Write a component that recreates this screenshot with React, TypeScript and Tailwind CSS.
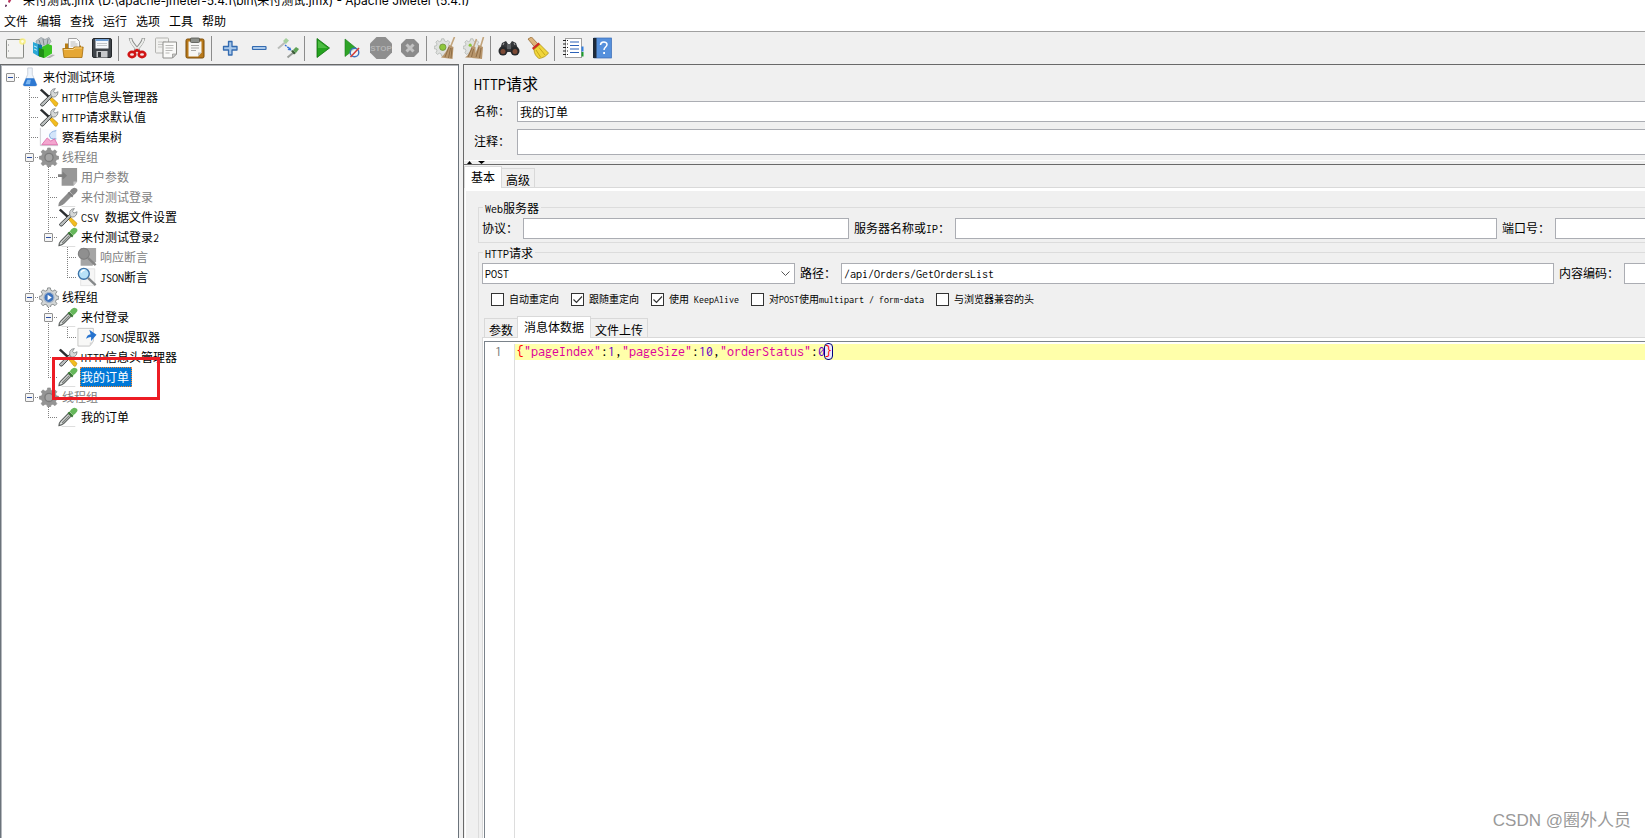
import React, { useState } from "react";

type IconProps = { className?: string };

const svg = (children: React.ReactNode, size = "size-[22px]") => (
  <svg viewBox="0 0 22 22" className={`${size} shrink-0`} aria-hidden="true">
    {children}
  </svg>
);

const NewIcon = () =>
  svg(
    <>
      <rect x="2.5" y="2.5" width="17" height="18.5" rx="1" fill="#f4f4f2" stroke="#888a85" />
      <path d="M4.5 7v2M4.5 13v2" stroke="#bbb" />
      <circle cx="18.500" cy="4.5" r="3.3" fill="#f8ee7a" opacity=".85" />
      <circle cx="18.500" cy="4.5" r="1.4" fill="#fffde0" />
    </>,
  );

const TemplatesIcon = () =>
  svg(
    <>
      <path d="M3 4l5-3.500 4 2 4-2 2 4-5 6-8 2z" fill="#bcc3c8" stroke="#8d9499" strokeWidth=".7" />
      <path d="M6 3l2 6M10 2l1 6M15 2l-1 6" stroke="#6c757b" strokeWidth=".8" />
      <path d="M0 5l5 2v12l-5-3z" fill="#2ba8d6" />
      <path d="M1 9l3 1.300M1 12l3 1.300" stroke="#d5f2ff" strokeWidth=".9" />
      <path d="M5 7l4 1v12l-4-1z" fill="#1279a3" />
      <path d="M9 10l6-3 4 1.500v8L11.500 21 9 20z" fill="#3cc524" />
      <path d="M6 11l5 1.500V21l-5-1.500z" fill="#1f8f14" />
      <path d="M13 21l6-3.500 3 .5-5 3z" fill="#777" opacity=".5" />
    </>,
  );

const OpenIcon = () =>
  svg(
    <>
      <path d="M3 18V6.500h4l1 2h11V18z" fill="#b87d12" />
      <path d="M6.500 12V1.500h8l3 3V12z" fill="#fafafa" stroke="#8b8b8b" strokeWidth=".8" />
      <path d="M8.500 5h5M8.500 7h7M8.500 9h7" stroke="#aaa" strokeWidth=".8" />
      <path d="M2 20.500L.8 11.500h10l1.500-1.500h8.900L20 20.500z" fill="#e5a734" stroke="#a66d0d" strokeWidth=".8" />
      <path d="M2 12.500h9.500l1.500-1.500h7" stroke="#f7d58a" fill="none" />
    </>,
  );

const SaveIcon = () =>
  svg(
    <>
      <rect x="1.500" y="1.500" width="19" height="19" rx="1.500" fill="#3f4449" stroke="#25282b" />
      <rect x="4.500" y="2" width="13" height="9.500" fill="#f5f8fb" />
      <path d="M4.500 2h13v2h-13z" fill="#6f9fd4" />
      <path d="M6 6.500h10M6 8.500h10" stroke="#b5b9bd" strokeWidth=".8" />
      <rect x="5.500" y="14" width="11" height="6.500" fill="#c7c9cb" />
      <rect x="7" y="15" width="3" height="5" fill="#33373b" />
    </>,
  );

const CutIcon = () =>
  svg(
    <>
      <path d="M4.500 1c0 4 4 8 8.500 13" stroke="#8a8d8a" strokeWidth="3.400" fill="none" />
      <path d="M17.500 1c0 4-4 8-8.500 13" stroke="#8a8d8a" strokeWidth="3.400" fill="none" />
      <path d="M4.500 1.500c0 3.500 4 8 7.500 11.500M17.500 1.500c0 3.500-4 8-7.500 11.500" stroke="#ecedeb" strokeWidth="2" fill="none" />
      <ellipse cx="6" cy="17.500" rx="3.300" ry="2.600" fill="#f4e4e4" stroke="#d01414" strokeWidth="2.600" />
      <ellipse cx="16" cy="17.500" rx="3.300" ry="2.600" fill="#f4e4e4" stroke="#d01414" strokeWidth="2.600" />
      <path d="M8 15l3-2 3 2" stroke="#d01414" strokeWidth="2.400" fill="none" />
    </>,
  );

const CopyIcon = () =>
  svg(
    <>
      <rect x=".5" y="1" width="13" height="15" rx=".8" fill="#f1f1ef" stroke="#b3b3b0" />
      <path d="M3 5h8M3 7.500h5M3 10h4" stroke="#c5c5c3" />
      <path d="M8 5h13.500v12l-4 4H8z" fill="#fafaf9" stroke="#8f8f8c" />
      <path d="M10.500 8.500h8M10.500 11h8M10.500 13.500h7M10.500 16h4" stroke="#b8b8b6" />
      <path d="M17.500 21v-4h4z" fill="#ccc" stroke="#8f8f8c" strokeWidth=".7" />
    </>,
  );

const PasteIcon = () =>
  svg(
    <>
      <rect x="2" y="2" width="18" height="19" rx="1.500" fill="#b8791b" stroke="#7a4c08" />
      <path d="M4.500 4.500h13v11l-3.500 4H4.500z" fill="#f6f6f4" />
      <path d="M14 19.500v-4h3.500z" fill="#bdbdbb" />
      <path d="M7 8.500h8M7 11h8M7 13.500h5" stroke="#a8a8a6" />
      <rect x="6.500" y="1" width="9" height="4.500" rx="1" fill="#8d908b" stroke="#50534e" strokeWidth=".8" />
    </>,
  );

const PlusIcon = () =>
  svg(
    <path
      d="M9.500 4.500h3.500v5h5V13h-5v5H9.500v-5h-5V9.500h5z"
      fill="#a9c8ea"
      stroke="#346bb0"
      strokeWidth="1.300"
      strokeLinejoin="round"
    />,
  );

const MinusIcon = () =>
  svg(<rect x="4.500" y="9.500" width="13.500" height="3" rx=".5" fill="#a9c8ea" stroke="#346bb0" strokeWidth="1.200" />);

const ToggleIcon = () =>
  svg(
    <>
      <path d="M1 11.500l7-6" stroke="#b9bcb9" strokeWidth="2" />
      <path d="M6 4l3-3 3 2.500L9 7z" fill="#a5cf9e" />
      <path d="M8 8l5 4" stroke="#2f6fd8" strokeWidth="1.300" strokeDasharray="2 1" />
      <path d="M14.500 13.500l-4-.5 2.500-3z" fill="#2f6fd8" />
      <path d="M10.500 20.500l6-5" stroke="#9a9e9a" strokeWidth="2" />
      <path d="M14 14l2-1 3 3-2 1.500z" fill="#3b5c38" />
      <path d="M16 13l3-3 3 2-3 4z" fill="#5ea257" />
    </>,
  );

const StartIcon = () =>
  svg(
    <>
      <path d="M5 1.500L17.500 11 5 20.500z" fill="#25a31f" stroke="#0c6d0b" strokeWidth=".8" />
      <path d="M6 3.500L15.500 11H6z" fill="#69cf5c" opacity=".6" />
    </>,
  );

const StartNoPauseIcon = () =>
  svg(
    <>
      <path d="M4 2L15 11 4 19.500z" fill="#2ea427" stroke="#1a7a18" strokeWidth=".6" />
      <circle cx="13.500" cy="15.500" r="4.300" fill="#f3f6fb" fillOpacity=".8" stroke="#3f72bf" strokeWidth="1.400" />
      <path d="M9.500 20l8.500-9" stroke="#d63a34" strokeWidth="1.500" />
    </>,
  );

const StopIcon = () =>
  svg(
    <>
      <path d="M6.500 0h9L22 6.500v9L15.500 22h-9L0 15.500v-9z" fill="#8e8e8e" />
      <text x="11" y="14" fontSize="8" fontWeight="bold" textAnchor="middle" fill="#b4b4b4" fontFamily="Liberation Sans, sans-serif">
        STOP
      </text>
    </>,
  );

const ShutdownIcon = () =>
  svg(
    <>
      <path d="M7 2h8l5 5v8l-5 5H7l-5-5V7z" fill="#8b8b8b" />
      <path d="M7.500 7.500l7 7M14.500 7.500l-7 7" stroke="#c2c2c2" strokeWidth="3" />
    </>,
  );

const gearPath =
  "M9.500 1h3l.6 2.700 2.200.9 2.300-1.500 2.100 2.100-1.500 2.300.9 2.200 2.700.6v3l-2.700.6-.9 2.200 1.500 2.300-2.100 2.100-2.300-1.500-2.200.9-.6 2.700h-3l-.6-2.700-2.200-.9-2.300 1.500-2.100-2.100 1.500-2.300-.9-2.200L.2 13.300v-3l2.700-.6.9-2.200-1.500-2.300 2.100-2.100 2.300 1.500 2.200-.9z";

const ClearIcon = () =>
  svg(
    <>
      <g transform="translate(0 1) scale(.8)">
        <path d={gearPath} fill="#dfe1df" stroke="#b3b6b3" />
        <circle cx="11" cy="11.500" r="4" fill="#8dc63a" stroke="#6c8f3a" />
      </g>
      <path d="M20.500 0l-4 10" stroke="#c2a47b" strokeWidth="1.600" />
      <path d="M15 8l4.500 2-1 12L7 20.500c3-2 6-7 8-12.500z" fill="#b8966c" />
      <path d="M15 10l-4 10M16.500 11l-2 10M18 11l-1 10" stroke="#85633c" strokeWidth=".8" />
    </>,
  );

const ClearAllIcon = () =>
  svg(
    <>
      <g transform="translate(0 1) scale(.8)">
        <path d={gearPath} fill="#dfe1df" stroke="#b3b6b3" />
        <circle cx="9" cy="9" r="2" fill="#8dc63a" />
      </g>
      <path d="M13.500 2l-3 8M20.500 0l-3 10" stroke="#c2a47b" strokeWidth="1.600" />
      <path d="M8.500 9l4 1v11L2 20.500c3-2 5.500-6 6.500-11.500z" fill="#b8966c" />
      <path d="M15.500 8l4.500 2-1 12-10-1c3-3 5-8 6.500-13z" fill="#b8966c" />
      <path d="M9 11l-4 9M10.500 12l-2 8M16 10l-3 10M18 11l-1.500 10" stroke="#85633c" strokeWidth=".8" />
    </>,
  );

const SearchIcon = () =>
  svg(
    <>
      <path d="M4 6l4-2 2 3h2l2-3 4 2 3 9H1z" fill="#35373a" />
      <rect x="9" y="7" width="4" height="5" fill="#5d6063" />
      <circle cx="5" cy="14" r="4.500" fill="#26282a" />
      <circle cx="17" cy="14" r="4.500" fill="#26282a" />
      <circle cx="5" cy="14.500" r="2.500" fill="#7d4a35" />
      <circle cx="17" cy="14.500" r="2.500" fill="#7d4a35" />
      <path d="M5 8l1-2M17 8l-1-2" stroke="#aaa" />
    </>,
  );

const SearchResetIcon = () =>
  svg(
    <>
      <path d="M1 2l3.500-2 7 7.500-3.500 3z" fill="#dcb27a" stroke="#8d6126" strokeWidth=".7" />
      <path d="M5 11l6.500-5.500 2 2L6.500 13z" fill="#cf2b24" />
      <path d="M7 12.500l6-5 8.500 8.500c-2 3-5.500 5-9.500 5.500-3-2-5-5-5-9z" fill="#f0d53b" stroke="#a88908" strokeWidth=".7" />
      <path d="M9 13l4.500 7M12 10.500l6 7.500" stroke="#bb9a12" strokeWidth=".8" />
    </>,
  );

const FunctionIcon = () =>
  svg(
    <>
      <rect x="3.500" y="1.500" width="16" height="19" fill="#fff" stroke="#a0a0a0" />
      <path d="M19.500 9.500h2v5h-2z" fill="#2f7de0" />
      <path d="M19.500 15h2v4.500h-2z" fill="#1a9c2b" />
      <path d="M8 5h9M8 8.500h9M8 12h9M8 15.500h9" stroke="#2c62b8" strokeWidth="1.200" />
      <path d="M1 3.500h3M1 7h3M1 10.500h3M1 14h3M1 17.500h3" stroke="#222" strokeWidth="1.200" />
      <path d="M5.500 3v16" stroke="#222" strokeDasharray="1 2.500" />
    </>,
  );

const HelpIcon = () =>
  svg(
    <>
      <rect x="3" y="1" width="17.500" height="20" fill="#5590dc" stroke="#3a6cb4" strokeWidth=".7" />
      <rect x="2" y="1" width="3.500" height="20" fill="#1e2a3a" />
      <path d="M9.500 8c0-4 6.500-4 6.500-.5 0 2.500-3 2.500-3 5.500" stroke="#fff" strokeWidth="1.500" fill="none" />
      <rect x="12.200" y="15" width="1.800" height="2" fill="#fff" />
    </>,
  );

const toolGroups: { name: string; Icon: React.FC<IconProps> }[][] = [
  [
    { name: "新建", Icon: NewIcon },
    { name: "模板", Icon: TemplatesIcon },
    { name: "打开", Icon: OpenIcon },
    { name: "保存", Icon: SaveIcon },
  ],
  [
    { name: "剪切", Icon: CutIcon },
    { name: "复制", Icon: CopyIcon },
    { name: "粘贴", Icon: PasteIcon },
  ],
  [
    { name: "展开", Icon: PlusIcon },
    { name: "折叠", Icon: MinusIcon },
    { name: "切换", Icon: ToggleIcon },
  ],
  [
    { name: "启动", Icon: StartIcon },
    { name: "不停顿开始", Icon: StartNoPauseIcon },
    { name: "停止", Icon: StopIcon },
    { name: "关闭", Icon: ShutdownIcon },
  ],
  [
    { name: "清除", Icon: ClearIcon },
    { name: "清除全部", Icon: ClearAllIcon },
  ],
  [
    { name: "搜索", Icon: SearchIcon },
    { name: "重置搜索", Icon: SearchResetIcon },
  ],
  [
    { name: "函数助手", Icon: FunctionIcon },
    { name: "帮助文档", Icon: HelpIcon },
  ],
];

type Kind = "plan" | "config" | "listener" | "group" | "pre" | "sampler" | "assert" | "post";

const nodeIcon = (kind: Kind, off?: boolean) => {
  const size = "size-5";
  switch (kind) {
    case "plan":
      return svg(
        <>
          <path d="M8.500 1h5v7l5 11.500q0 1.500-2 1.500h-11q-2 0-2-1.500L8.500 8z" fill="#eef4fb" stroke="#c3ccd6" strokeWidth=".9" />
          <path d="M6.500 12.500h9l3 7q0 1.500-2 1.500h-11q-2 0-2-1.500z" fill="#2d78d2" />
          <path d="M8 14h4l-1 5H6z" fill="#7db6f0" />
        </>,
        size,
      );
    case "config":
      return svg(
        <>
          <path d="M1 3.500l2-1.500 10 9-2 2z" fill="#2b2e30" />
          <path d="M11.500 13.500l2-2.500 7.500 7-1.500 3q-1 .5-2 0z" fill="#f3bd1f" stroke="#b98504" strokeWidth=".6" />
          <path d="M1.500 19L13.500 7.500l2 2L4.500 21q-2.500.5-3-2z" fill="#b9bdbd" stroke="#3c4041" strokeWidth="1" />
          <path d="M13 8.500q-1-4 2-6l3-.8-2 3 1.500 2 3.500-1.500q0 4-3 5.500-2 .8-4 0z" fill="#d5d8d8" stroke="#74787a" strokeWidth=".8" />
        </>,
        size,
      );
    case "listener":
      return svg(
        <>
          <rect x="2" y="2" width="18" height="17" fill="#fafbff" />
          <path d="M1.500 1v19.500H21" stroke="#c9c9d0" fill="none" />
          <path d="M12 13q-2-7 7-9v10z" fill="#d3e5fa" />
          <path d="M19 4q-7 1-7.500 5.500 .5 4.500 7.500 3.500" stroke="#7aa5dc" strokeWidth="1" fill="none" />
          <path d="M3 19.500l6-7.500 4 3.500 4-2.500 3.500 6.500z" fill="#f3a6cf" stroke="#d95aa0" strokeWidth=".8" />
        </>,
        size,
      );
    case "group":
      return svg(
        off ? (
          <>
            <path d={gearPath} fill="#949494" stroke="#858585" strokeWidth=".6" />
            <circle cx="11" cy="11.500" r="4.500" fill="#a5a5a5" stroke="#7b7b7b" strokeWidth="1.500" />
          </>
        ) : (
          <>
            <path d={gearPath} fill="#d3d6d6" stroke="#85898a" strokeWidth="1" />
            <circle cx="11" cy="11.500" r="5.500" fill="#3f74bd" stroke="#a5b4c8" strokeWidth="1.200" />
            <path d="M9.500 8.500l4.500 3-4.500 3z" fill="#fff" />
          </>
        ),
        size,
      );
    case "pre":
      return svg(
        <>
          <path d="M4 1h17v15l-4 4.500H4z" fill="#979797" />
          <path d="M17 20.500v-4.500h4z" fill="#c4c4c4" />
          <path d="M0 8h5V5l5 4.500L5 14v-3H0z" fill="#7f7f7f" />
        </>,
        size,
      );
    case "sampler":
      return svg(
        <>
          <path d="M4 21.500h15" stroke="#d9d9d9" />
          <path
            d="M1 20.500q0-3 2-5L11.500 7l3 3L6.500 18q-2 2-5.500 2.500z"
            fill={off ? "#8d8d8d" : "#dcdfdd"}
            stroke={off ? "#8a8a8a" : "#5b5f5d"}
            strokeWidth="1.200"
          />
          {!off && <path d="M4.500 17.500l8-8" stroke="#7e8280" strokeWidth="1.500" />}
          <path d="M10.500 6.500l2-1.500 4.500 4.500-1.500 2z" fill={off ? "#7c7c7c" : "#3b7a34"} />
          <path d="M13 5q2.500-4.500 6-4 3.500 1 2 4-1.500 2.500-4.500 4z" fill={off ? "#868686" : "#66b85b"} />
        </>,
        size,
      );
    case "assert":
      return svg(
        off ? (
          <>
            <path d="M4 1h17v15l-4 4.500H4z" fill="#a5a5a5" />
            <circle cx="7.500" cy="7.500" r="6" fill="#8f8f8f" stroke="#7d7d7d" strokeWidth="1.200" />
            <path d="M12 12l8.500 8" stroke="#858585" strokeWidth="2.500" />
          </>
        ) : (
          <>
            <path d="M4 2h15.500v18.500H4z" fill="#f6f6f6" stroke="#ddd" strokeWidth=".8" />
            <circle cx="7.500" cy="7.500" r="6" fill="#b9e2f8" stroke="#3b72a8" strokeWidth="1.500" />
            <path d="M4.500 6q1-2.500 4-2.500" stroke="#fff" strokeWidth="1.500" fill="none" />
            <path d="M12 12l8.500 8" stroke="#85888a" strokeWidth="2.500" />
          </>
        ),
        size,
      );
    case "post":
      return svg(
        <>
          <path d="M1 1.500h17v14l-4 5.500H1z" fill="#f8f8f7" stroke="#bdbdbb" strokeWidth=".9" />
          <path d="M10 13q1-4.500 5-5L13.500 3l8 5.500-6 7V11q-3 0-5.500 2z" fill="#2673cf" />
          <path d="M14 21v-4h4z" fill="#d5d5d5" />
        </>,
        size,
      );
  }
};

type Node = { label: string; kind: Kind; off?: boolean; selected?: boolean; children?: Node[] };

const plan: Node = {
  label: "来付测试环境",
  kind: "plan",
  children: [
    { label: "HTTP信息头管理器", kind: "config" },
    { label: "HTTP请求默认值", kind: "config" },
    { label: "察看结果树", kind: "listener" },
    {
      label: "线程组",
      kind: "group",
      off: true,
      children: [
        { label: "用户参数", kind: "pre", off: true },
        { label: "来付测试登录", kind: "sampler", off: true },
        { label: "CSV 数据文件设置", kind: "config" },
        {
          label: "来付测试登录2",
          kind: "sampler",
          children: [
            { label: "响应断言", kind: "assert", off: true },
            { label: "JSON断言", kind: "assert" },
          ],
        },
      ],
    },
    {
      label: "线程组",
      kind: "group",
      children: [
        { label: "来付登录", kind: "sampler", children: [{ label: "JSON提取器", kind: "post" }] },
        { label: "HTTP信息头管理器", kind: "config" },
        { label: "我的订单", kind: "sampler", selected: true },
      ],
    },
    {
      label: "线程组",
      kind: "group",
      off: true,
      children: [{ label: "我的订单", kind: "sampler" }],
    },
  ],
};

function Guide({ top, bottom, right, box, onToggle, open }: {
  top?: boolean;
  bottom?: boolean;
  right?: boolean;
  box?: boolean;
  open?: boolean;
  onToggle?: () => void;
}) {
  return (
    <span className="grid h-5 w-[19px] shrink-0 place-items-center">
      <svg viewBox="0 0 19 20" className="col-start-1 row-start-1 h-5 w-[19px]" aria-hidden="true">
        <g stroke="#808080" strokeDasharray="1 1" shapeRendering="crispEdges">
          {top && <path d="M9.500 0V10" />}
          {bottom && <path d="M9.500 10V20" />}
          {right && <path d="M9 10.500H19" />}
        </g>
      </svg>
      {box && (
        <button
          type="button"
          aria-label={open ? "折叠节点" : "展开节点"}
          onClick={onToggle}
          className="col-start-1 row-start-1 grid size-[9px] place-items-center rounded-[1px] border border-[#919191] bg-[#f5f5f5]"
        >
          <span className="h-px w-[5px] bg-[#2b4fa3]" />
        </button>
      )}
    </span>
  );
}

function TreeRow({ node, trail, last, root }: { node: Node; trail: boolean[]; last?: boolean; root?: boolean }) {
  const [open, setOpen] = useState(true);
  const hasKids = !!node.children?.length;
  return (
    <li>
      <div className="flex h-5 items-center">
        {trail.map((on, i) => (
          <Guide key={i} top={on} bottom={on} />
        ))}
        <Guide top={!root} bottom={!root && !last} right box={hasKids} open={open} onToggle={() => setOpen(!open)} />
        <span className="mr-0.5">{nodeIcon(node.kind, node.off)}</span>
        <span
          className={
            node.selected
              ? "h-5 border border-dotted border-[#ff8728] bg-[#0078d7] pr-0.5 leading-5 text-white"
              : node.off
                ? "h-5 border border-transparent leading-5 text-[#808080]"
                : "h-5 border border-transparent leading-5"
          }
        >
          {node.label}
        </span>
      </div>
      {hasKids && open && (
        <ul>
          {node.children!.map((c, i) => (
            <TreeRow key={i} node={c} trail={[...trail, !root && !last]} last={i === node.children!.length - 1} />
          ))}
        </ul>
      )}
    </li>
  );
}

const field = "h-[21px] min-w-0 border border-[#abadb3] bg-white px-0.5 outline-none";

function Field({ id, label, value, className }: { id: string; label: string; value?: string; className: string }) {
  return (
    <>
      <label htmlFor={id} className="shrink-0">
        {label}
      </label>
      <input id={id} type="text" defaultValue={value} className={`${field} basis-0 ${className}`} />
    </>
  );
}

function Check({ label, checked }: { label: string; checked?: boolean }) {
  return (
    <label className="flex items-center gap-[5px]">
      <span className="grid size-[13px] place-items-center">
        <input
          type="checkbox"
          defaultChecked={checked}
          className="peer col-start-1 row-start-1 size-[13px] appearance-none border border-[#333] bg-white"
        />
        <svg viewBox="0 0 13 13" className="pointer-events-none invisible col-start-1 row-start-1 size-[13px] peer-checked:visible" aria-hidden="true">
          <path d="M2.500 6.500l3 3 5.500-6" fill="none" stroke="#333" strokeWidth="1.200" />
        </svg>
      </span>
      {label}
    </label>
  );
}

const menus = ["文件", "编辑", "查找", "运行", "选项", "工具", "帮助"];

export default function App() {
  return (
    <div className="relative flex h-screen flex-col overflow-hidden bg-[#f0f0f0] font-['Inconsolata','Noto_Sans_Mono_CJK_SC','Noto_Sans_CJK_SC',monospace] text-[12px] leading-4 whitespace-pre text-black">
      <header className="flex h-[9px] shrink-0 items-end overflow-hidden bg-white font-['Inter','Noto_Sans_CJK_SC',sans-serif]">
        <svg viewBox="0 0 16 16" className="mr-[3px] ml-1 size-4 shrink-0" aria-hidden="true">
          <path d="M1 14l.500-2.500 1.500.5-.5 1.500z" fill="#4a1240" />
          <path d="M4 9q1-5 3-7l1 3q-1 3-2.500 5z" fill="#b8325c" />
        </svg>
        <h1>来付测试.jmx (D:\apache-jmeter-5.4.1\bin\来付测试.jmx) - Apache JMeter (5.4.1)</h1>
      </header>
      <nav className="flex h-[22px] shrink-0 items-end gap-[9px] bg-white px-1 pb-0.5 font-['Noto_Sans_CJK_SC',sans-serif]">
        {menus.map((m) => (
          <button key={m} type="button">
            {m}
          </button>
        ))}
      </nav>
      <div role="toolbar" className="flex h-[33px] shrink-0 items-center border-t border-[#a0a0a0]">
        {toolGroups.map((g, i) => (
          <React.Fragment key={i}>
            {i > 0 && <span className="mr-[3px] ml-0.5 h-[25px] w-px bg-[#8c8c8c]" />}
            {g.map(({ name, Icon }) => (
              <button key={name} type="button" aria-label={name} className="grid w-[29px] place-items-center">
                <Icon />
              </button>
            ))}
          </React.Fragment>
        ))}
      </div>

      <div className="flex min-h-0 flex-1">
        <aside className="relative mr-1 w-[459px] shrink-0 border border-b-0 border-[#6b737b] border-t-[#696969] bg-white pt-0.5 shadow-[inset_1px_1px_0_#b4b8bd]">
          <ul>
            <TreeRow node={plan} trail={[]} root last />
          </ul>
          <div className="pointer-events-none absolute top-[292px] left-[51px] h-[43px] w-[108px] border-[3px] border-[#ed1c24]" />
        </aside>

        <main className="flex min-w-0 flex-1 flex-col border-t border-l border-[#696969]">
          <section className="flex shrink-0 flex-col pb-[5px] pl-2.5">
            <h2 className="h-9 text-[16px] leading-10">HTTP请求</h2>
            <div className="flex items-center gap-[7px]">
              <Field id="name" label="名称：" value="我的订单" className="grow border-r-0" />
            </div>
            <div className="mt-[7px] flex items-center gap-[7px]">
              <label htmlFor="comment">注释：</label>
              <input id="comment" type="text" className="h-[26px] min-w-0 grow border border-r-0 border-[#abadb3] bg-white px-0.5" />
            </div>
          </section>

          <div className="flex h-[5px] shrink-0 items-end gap-1.5 border-t border-b border-t-white border-b-[#696969] pl-[3px]">
            <svg viewBox="0 0 5 3" className="h-[3px] w-[5px]" aria-hidden="true">
              <path d="M0 3h5L2.500 0z" />
            </svg>
            <svg viewBox="0 0 7 3" className="h-[3px] w-[7px]" aria-hidden="true">
              <path d="M0 0h7L3.500 3z" />
            </svg>
          </div>

          <div role="tablist" className="flex h-[23px] shrink-0 items-end border-b border-[#d9d9d9]">
            <button role="tab" aria-selected="true" type="button" className="-mb-px h-[22px] border border-b-0 border-[#d9d9d9] bg-white px-1.5">
              基本
            </button>
            <button role="tab" aria-selected="false" type="button" className="h-[19px] border border-b-0 border-l-0 border-[#d9d9d9] px-1 pt-1">
              高级
            </button>
          </div>

          <div className="ml-px flex min-h-0 flex-1 flex-col border-t-[3px] border-l border-white pt-2 pl-3">
            <fieldset className="min-w-0 shrink-0 border border-r-0 border-[#dcdcdc] pb-[3px] pl-[3px]">
              <legend className="ml-px h-4 px-0.5 leading-5">Web服务器</legend>
              <div className="mt-[3px] flex items-center gap-[5px]">
                <Field id="protocol" label="协议：" className="grow-[320]" />
                <Field id="server" label="服务器名称或IP：" className="grow-[536]" />
                <Field id="port" label="端口号：" className="grow-[85] border-r-0" />
              </div>
            </fieldset>

            <fieldset className="mt-px flex min-h-0 min-w-0 flex-1 flex-col border border-r-0 border-b-0 border-[#dcdcdc] pl-[3px]">
              <legend className="ml-px h-4 px-0.5 leading-5">HTTP请求</legend>
              <div className="mt-[3px] flex shrink-0 items-center gap-[5px]">
                <div className="grid grow-[313] basis-0 items-center">
                  <select aria-label="请求方法" className={`${field} col-start-1 row-start-1 w-full appearance-none`}>
                    <option>POST</option>
                    <option>GET</option>
                  </select>
                  <svg viewBox="0 0 9 6" className="pointer-events-none col-start-1 row-start-1 mr-[5px] h-1.5 w-[9px] justify-self-end" aria-hidden="true">
                    <path d="M.5.5l4 4 4-4" fill="none" stroke="#555" />
                  </svg>
                </div>
                <Field id="path" label="路径：" value="/api/Orders/GetOrdersList" className="grow-[707]" />
                <Field id="encoding" label="内容编码：" className="grow-[16] border-r-0" />
              </div>

              <div className="mt-[9px] flex h-[13px] shrink-0 items-center gap-3 pl-[9px] text-[10px]">
                <Check label="自动重定向" />
                <Check label="跟随重定向" checked />
                <Check label="使用 KeepAlive" checked />
                <Check label="对POST使用multipart / form-data" />
                <Check label="与浏览器兼容的头" />
              </div>

              <div role="tablist" className="mt-2.5 flex h-[22px] shrink-0 items-end border-b border-[#d9d9d9] pl-0.5">
                <button role="tab" aria-selected="false" type="button" className="h-[19px] border border-r-0 border-b-0 border-[#d9d9d9] px-1 pt-1">
                  参数
                </button>
                <button role="tab" aria-selected="true" type="button" className="-mb-px h-[22px] border border-b-0 border-[#d9d9d9] bg-white px-1.5">
                  消息体数据
                </button>
                <button role="tab" aria-selected="false" type="button" className="h-[19px] border border-b-0 border-l-0 border-[#d9d9d9] px-1 pt-1">
                  文件上传
                </button>
              </div>

              <div className="flex min-h-0 flex-1 border-l border-[#d9d9d9] bg-white pt-[3px] pl-px">
                <div className="flex min-h-0 flex-1 border-t border-l border-[#7a828a] pt-0.5 text-[14px]">
                  <div className="w-[30px] border-r border-[#dddddd] pl-2.5 text-[#787878]">1</div>
                  <div
                    role="textbox"
                    aria-label="消息体数据"
                    contentEditable
                    suppressContentEditableWarning
                    className="h-4 flex-1 bg-[#ffffaa] pl-0.5 leading-[15px] outline-none"
                  >
                    <span className="text-[#ff0000]">{"{"}</span>
                    <span className="text-[#dc009c]">"pageIndex"</span>:<span className="text-[#6400c8]">1</span>,
                    <span className="text-[#dc009c]">"pageSize"</span>:<span className="text-[#6400c8]">10</span>,
                    <span className="text-[#dc009c]">"orderStatus"</span>:<span className="text-[#6400c8]">0</span>
                    <span className="rounded-[3px] bg-[#eaeaff] text-[#ff0000] outline outline-[#000080]">{"}"}</span>
                  </div>
                </div>
              </div>
            </fieldset>
          </div>
        </main>
      </div>

      <p className="pointer-events-none absolute right-[14px] bottom-[7px] font-['Liberation_Sans','Noto_Sans_CJK_SC',sans-serif] text-[17px] leading-5 text-[#999]">
        CSDN @圈外人员
      </p>
    </div>
  );
}
